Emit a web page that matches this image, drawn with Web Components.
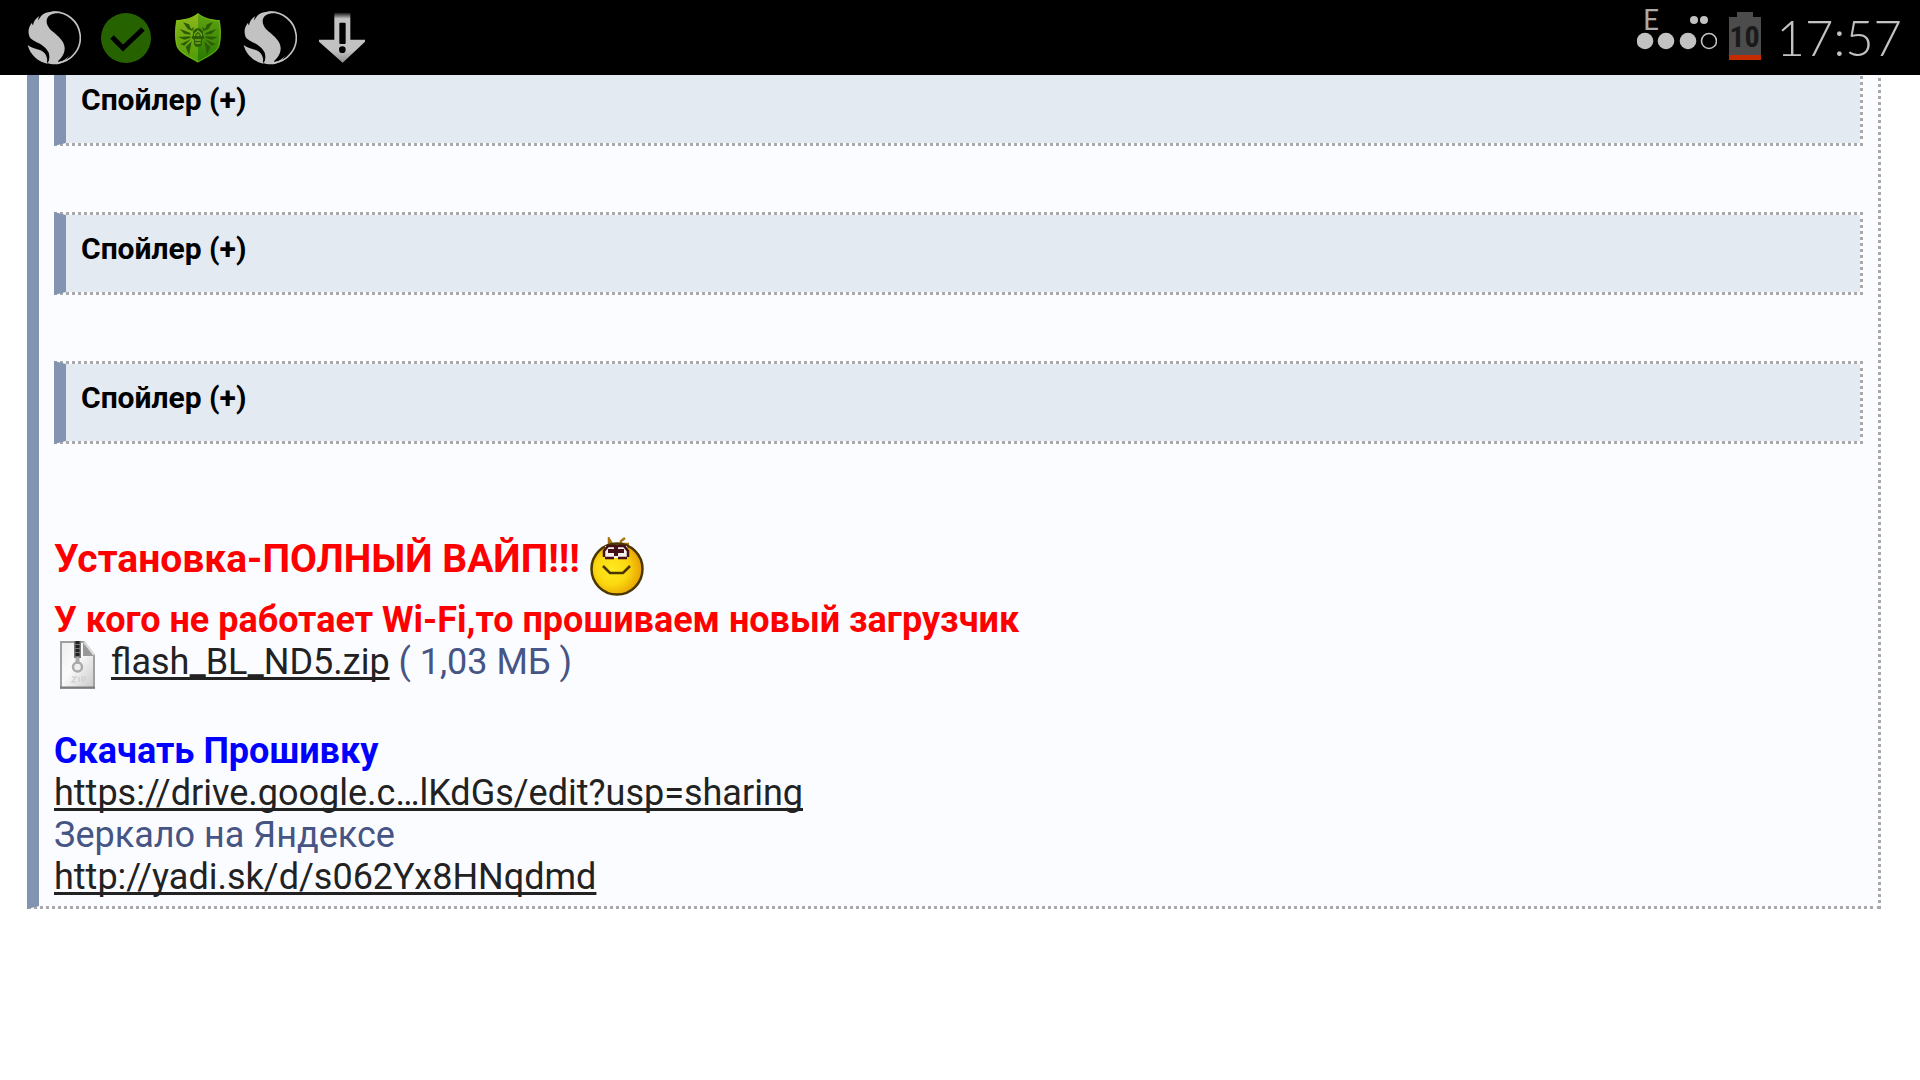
<!DOCTYPE html>
<html lang="ru">
<head>
<meta charset="utf-8">
<meta name="viewport" content="width=device-width, initial-scale=1">
<title>Прошивка</title>
<style>
  html, body { margin: 0; background: #fff; }
  body { font-family: Roboto, "Noto Sans", sans-serif; min-height: 100vh; }
</style>
</head>
<body>
<status-bar>
  <snapdragon-icon></snapdragon-icon>
  <check-icon></check-icon>
  <shield-icon></shield-icon>
  <snapdragon-icon></snapdragon-icon>
  <download-icon></download-icon>
  <signal-meter slot="end"></signal-meter>
  <battery-meter slot="end" level="10"></battery-meter>
  <clock-text slot="end">17:57</clock-text>
</status-bar>
<forum-post>
  <spoiler-box slot="spoilers">Спойлер (+)</spoiler-box>
  <spoiler-box slot="spoilers">Спойлер (+)</spoiler-box>
  <spoiler-box slot="spoilers">Спойлер (+)</spoiler-box>
  <post-line kind="title">Установка-ПОЛНЫЙ ВАЙП!!! <smile-icon slot="after"></smile-icon></post-line>
  <post-line kind="warn">У кого не работает Wi-Fi,то прошиваем новый загрузчик</post-line>
  <file-link href="#flash" name="flash_BL_ND5.zip">( 1,03 МБ )</file-link>
  <post-line kind="head">Скачать Прошивку</post-line>
  <text-link href="https://drive.google.com/">https://drive.google.c…lKdGs/edit?usp=sharing</text-link>
  <post-line>Зеркало на Яндексе</post-line>
  <text-link href="http://yadi.sk/d/s062Yx8HNqdmd">http://yadi.sk/d/s062Yx8HNqdmd</text-link>
</forum-post>
<script>
function define(name, html) {
  const template = document.createElement('template');
  template.innerHTML = html;
  customElements.define(name, class extends HTMLElement {
    constructor() {
      super();
      const root = this.attachShadow({ mode: 'open' });
      root.append(template.content.cloneNode(true));
      root.querySelectorAll('[data-attr]').forEach(el => {
        el.textContent = this.getAttribute(el.dataset.attr);
      });
      const a = root.querySelector('a');
      if (a) a.href = this.getAttribute('href');
    }
  });
}
const iconBox = '<style>:host{display:block;flex:none;width:54px;height:54px}svg{display:block;width:100%;height:100%}</style>';

define('status-bar', `
<style>
  :host { display: flex; position: sticky; top: 0; z-index: 2; height: 75px; box-sizing: border-box;
    padding: 0 18px 0 27px; background: #000; align-items: center; justify-content: space-between; }
  .group { display: flex; align-items: center; gap: 18px; }
  .end { gap: 12px; }
</style>
<div class="group"><slot></slot></div>
<div class="group end"><slot name="end"></slot></div>`);

define('snapdragon-icon', iconBox + `
<svg viewBox="0 0 162 162" fill="#c2c2c2">
  <path d="M75 4A76 76 0 0 1 92 156" fill="none" stroke="#c2c2c2" stroke-width="5"/>
  <path d="M95 3C76 0 60 3 48 10C42 15 38 21 34 28C33 24 34 20 37 15C25 23 20 31 18 43C16 41 15 38 15 35C3 50 4 62 6 72C8 84 20 89 34 96C50 104 62 115 65 128C68 141 64 149 60 156C70 160 87 161 98 158L93 150C108 138 113 124 113 112C113 91 93 75 76 61C63 50 56 36 60 24C63 13 76 7 95 6Z"/>
  <path d="M2 102C12 111 25 113 38 117C55 123 62 136 61 158C35 153 9 132 2 102Z"/>
  <path d="M61 122C66 132 66 145 61 154" fill="none" stroke="#000" stroke-width="4"/>
  <path d="M92 154C110 151 120 142 127 133C118 148 106 157 92 160Z"/>
</svg>`);

define('check-icon', iconBox + `
<svg viewBox="0 0 54 54"><circle cx="27" cy="27" r="25" fill="#276200"/>
<path d="M13 26L24 37L44 18" fill="none" stroke="#000" stroke-width="5"/></svg>`);

define('shield-icon', iconBox + `
<svg viewBox="0 0 162 162">
  <defs>
    <linearGradient id="l" x1="0" y1="0" x2="0" y2="1"><stop offset="0" stop-color="#8fb81a"/><stop offset="1" stop-color="#4d9a08"/></linearGradient>
    <linearGradient id="r" x1="0" y1="0" x2="0" y2="1"><stop offset="0" stop-color="#62a410"/><stop offset="1" stop-color="#267800"/></linearGradient>
  </defs>
  <path d="M81 6C64 21 37 27 16 27C10 60 11 87 17 107C26 128 55 139 81 155Z" fill="url(#l)"/>
  <path d="M81 6C98 21 125 27 146 27C152 60 151 87 145 107C136 128 107 139 81 155Z" fill="url(#r)"/>
  <path d="M81 9C99 23 124 29 144 29C149 60 148 86 143 105C135 125 107 137 81 152C55 137 27 125 19 105C14 86 13 60 18 29C38 29 63 23 81 9Z" fill="none" stroke="#75c719" stroke-width="2"/>
  <g fill="#2c5c06">
    <path d="M36 34L54 40L60 54L70 48L64 60L50 54ZM26 54L44 60L58 66V71L40 68ZM22 78L58 76V81L40 86ZM28 100L60 84L40 104ZM44 108L62 91L54 132Z"/>
    <path d="M126 34L108 40L102 54L92 48L98 60L112 54ZM136 54L118 60L104 66V71L122 68ZM140 78L104 76V81L122 86ZM134 100L102 84L122 104ZM118 108L100 91L108 132Z"/>
    <path d="M66 72Q62 55 81 51Q100 55 96 72L101 80L93 86V100L88 107H74L69 100V86L61 80Z"/>
  </g>
  <path d="M71 75V69L81 60L91 69V75M77 74L81 70L85 74M72 87H90M73 96H89" fill="none" stroke="#72ac14" stroke-width="4"/>
</svg>`);

define('download-icon', iconBox + `
<svg viewBox="0 0 162 162">
  <defs><linearGradient id="s" x1="0" y1="0" x2="0" y2="1"><stop offset="0" stop-color="#c2c2c2" stop-opacity=".1"/><stop offset=".12" stop-color="#c2c2c2"/><stop offset=".75" stop-color="#c2c2c2"/><stop offset="1" stop-color="#c2c2c2" stop-opacity=".75"/></linearGradient></defs>
  <path d="M58 5H106V86H150V92L83 155L12 92V86H58Z" fill="url(#s)"/>
  <rect x="73" y="35" width="19" height="64" rx="3"/>
  <circle cx="82" cy="116" r="10"/>
</svg>`);

define('signal-meter', `
<style>:host{display:block;width:80px;height:75px}svg{display:block}text{font:400 28px Lato,sans-serif}</style>
<svg width="80" height="75" viewBox="0 0 80 75" fill="#c2c2c2">
  <text x="6" y="30" fill="#aaa">E</text>
  <circle cx="57" cy="20" r="4"/><circle cx="67" cy="20" r="4"/>
  <circle cx="8" cy="41" r="8.3"/><circle cx="29" cy="41" r="8.3"/><circle cx="51" cy="41" r="8.3"/>
  <circle cx="72" cy="41" r="7.5" fill="none" stroke="#c2c2c2" stroke-width="1.6"/>
</svg>`);

define('battery-meter', `
<style>
  :host { display: grid; width: 32px; height: 75px; }
  svg, span { grid-area: 1 / 1; }
  span { font: bold 30px/73px "Liberation Sans Narrow", "Roboto Condensed", "Open Sans", sans-serif; color: #1a1a1a; justify-self: center; }
</style>
<svg width="32" height="75" viewBox="0 0 32 75"><path d="M0 17H8V12H24V17H32V55H0Z" fill="#4c4c4c"/><path d="M0 55H32V60H0Z" fill="#c42b00"/></svg>
<span data-attr="level"></span>`);

define('clock-text', `
<style>:host{display:block;padding-left:4px;font:300 49px/75px Lato,sans-serif;color:#c2c2c2}</style><slot></slot>`);

define('forum-post', `
<style>
  :host { display: block; margin: -75px 39px 0 27px; padding: 63px 15px 8px; background: #fbfcff;
    border: 3px dotted #a9a9a9; border-top: 0; border-left: 12px solid #8394b2; }
  .spoilers { display: flex; flex-direction: column; gap: 66px; padding-bottom: 87px; }
  .text { display: flex; flex-direction: column; align-items: flex-start; }
</style>
<div class="spoilers"><slot name="spoilers"></slot></div>
<div class="text"><slot></slot></div>`);

define('spoiler-box', `
<style>
  :host { display: block; border: 3px dotted #a9a9a9; border-left: 12px solid #8394b2; background: #e4eaf2; background-clip: padding-box; }
  button { display: block; width: 100%; padding: 17px 15px 27px; border: 0; background: none; text-align: left;
    font: bold 30px/33px Roboto, sans-serif; color: #000; }
</style>
<button type="button" aria-expanded="false"><slot></slot></button>`);

define('post-line', `
<style>
  :host { display: flex; font-size: 36px; line-height: 42px; color: #465584; }
  :host([kind]) { font-weight: bold; }
  :host([kind=title]) { font-size: 39px; line-height: 56px; height: 68px; color: #f00; }
  :host([kind=warn]) { color: #f00; }
  :host([kind=head]) { color: #00f; }
  span { white-space: pre-wrap; }
</style>
<span><slot></slot></span><slot name="after"></slot>`);

define('text-link', `
<style>
  :host { display: block; font-size: 36px; line-height: 42px; }
  a { color: #222; text-decoration: underline; text-decoration-skip-ink: none; text-decoration-thickness: 3px; text-underline-offset: 3px; }
</style>
<a><slot></slot></a>`);

define('file-link', `
<style>
  :host { display: flex; height: 89px; font-size: 36px; line-height: 42px; color: #465584; }
  svg { width: 48px; height: 48px; margin-right: 9px; }
  span { white-space: pre-wrap; }
  a { color: #222; text-decoration: underline; text-decoration-skip-ink: none; text-decoration-thickness: 3px; text-underline-offset: 3px; }
</style>
<svg viewBox="0 0 48 48">
  <defs><linearGradient id="p" x1="0" y1="0" x2="1" y2="1"><stop offset="0" stop-color="#eee"/><stop offset=".45" stop-color="#fafafa"/><stop offset="1" stop-color="#c8c8c8"/></linearGradient></defs>
  <path d="M7 1H30L40 14V47H7Z" fill="url(#p)" stroke="#a0a0a0" stroke-width="2"/>
  <path d="M6 46.5H41" stroke="#7c7c7c" stroke-width="2"/>
  <path d="M29 1L40 15H29Z" fill="#999"/><path d="M30 1L40 14" stroke="#ddd" stroke-width="2"/>
  <path d="M20 0H27V17H20Z" fill="#777"/><path d="M23.500 0V17" stroke="#222" stroke-width="4" stroke-dasharray="3 1"/>
  <circle cx="23.500" cy="26" r="4.500" fill="#eee" stroke="#aaa" stroke-width="2.500"/><path d="M23.500 16V23" stroke="#aaa" stroke-width="4"/>
  <path d="M18 36H22L18 41H22M25 36V41M28 41V36H31V39H28" fill="none" stroke="#d2d2d2" stroke-width="1.500"/>
</svg><a data-attr="name"></a><span> <slot></slot></span>`);

define('smile-icon', `
<style>:host{display:block;flex:none;width:60px;height:60px;margin-top:6px}svg{display:block}</style>
<svg width="60" height="60" viewBox="0 0 60 60">
  <defs><radialGradient id="y" cx=".4" cy=".5" r=".62"><stop offset="0" stop-color="#ffea20"/><stop offset=".5" stop-color="#fbd80f"/><stop offset="1" stop-color="#e59a00"/></radialGradient></defs>
  <path d="M19 7V2L22 7M31 7V4L35 1M33 7L39 7" fill="none" stroke="#aa7416" stroke-width="2.500"/>
  <circle cx="27" cy="32" r="25.500" fill="url(#y)" stroke="#4b3800" stroke-width="2.500"/>
  <path d="M15 9H37V21H15Z" fill="#f4f0ee"/>
  <path d="M14 20V14L18 9H34L38 14V20M15 21H24M28 21H37" fill="none" stroke="#461018" stroke-width="2.500"/>
  <path d="M18 12H34V16H18ZM24 9H28V19H24Z" fill="#461018"/>
  <path d="M13 29L18 34L20 36H33L36 33L40 29" fill="none" stroke="#493500" stroke-width="2.500"/>
</svg>`);
</script>
</body>
</html>
